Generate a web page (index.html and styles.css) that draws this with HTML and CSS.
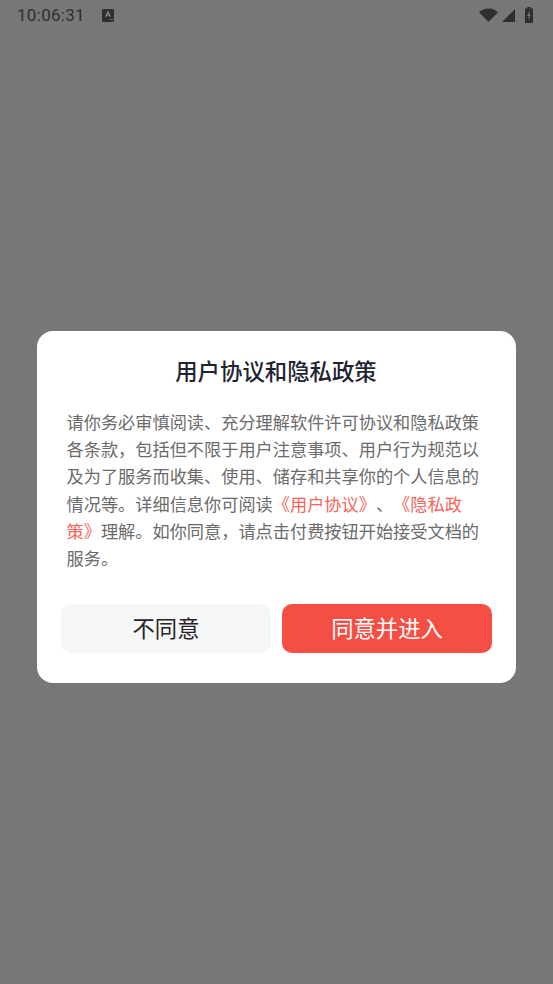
FILE: index.html
```html
<!DOCTYPE html>
<html lang="zh-CN">
  <head>
    <meta charset="utf-8">
    <title>用户协议和隐私政策</title>
    <link rel="stylesheet" href="styles.css">
  </head>
  <body>
    <div class="status-bar">
      <span class="time">10:06:31</span>
      <svg class="a-icon" width="12" height="13" viewBox="0 0 12 13">
        <rect width="12" height="13" rx="1" fill="#2f2f2f"/>
        <path d="M3.2 7.8 5.3 2.4h1.3l2.1 5.4H7.5L7.1 6.6H4.8l-.4 1.2zM5.1 5.7h1.7L6 3.6z" fill="#9a9a9a"/>
        <path d="M7.5 10h3.5v.9H7.5z" fill="#777"/>
      </svg>
      <div class="status-icons">
        <svg class="wifi" width="19" height="14" viewBox="0 0 19 14">
          <path d="M0 4.2C2.5 1.8 5.7.4 9.5.4S16.500 1.800 19 4.200L9.500 14z" fill="#2f2f2f"/>
        </svg>
        <svg class="signal" width="13" height="13" viewBox="0 0 13 13">
          <path d="M0 13 13 0v13z" fill="#2f2f2f"/>
        </svg>
        <svg class="battery" width="8" height="16" viewBox="0 0 8 16">
          <path d="M0 1.500h2.200V0h3.600v1.500H8V16H0z" fill="#2f2f2f"/>
          <path d="M4.600 3.400 2.200 9h1.600l-.5 4.400L5.800 7.500H4.200z" fill="#777"/>
        </svg>
      </div>
    </div>

    <div class="overlay">
      <div class="dialog">
        <h1 class="dialog-title">用户协议和隐私政策</h1>
        <p class="dialog-text">请你务必审慎阅读、充分理解软件许可协议和隐私政策各条款，包括但不限于用户注意事项、用户行为规范以及为了服务而收集、使用、储存和共享你的个人信息的情况等。详细信息你可阅读<a class="link">《用户协议》</a>、<a class="link">《隐私政策》</a>理解。如你同意，请点击付费按钮开始接受文档的服务。</p>
        <div class="dialog-buttons">
          <button class="btn btn-cancel">不同意</button>
          <button class="btn btn-ok">同意并进入</button>
        </div>
      </div>
    </div>
  </body>
</html>
```

FILE: styles.css
```css
html,
body {
  height: 100%;
}

body {
  margin: 0;
  background-color: #777777;
  font-family: "Noto Sans CJK SC", "Noto Sans", sans-serif;
  text-spacing-trim: space-all;
  display: flex;
  flex-direction: column;
  overflow: hidden;
}

.status-bar {
  height: 30px;
  display: flex;
  align-items: center;
  padding: 0 17px;
  box-sizing: border-box;
  color: #2f2f2f;
}

.time {
  font-family: Roboto, sans-serif;
  font-size: 17px;
  letter-spacing: 0.3px;
}

.a-icon {
  margin-left: 17px;
}

.status-icons {
  margin-left: auto;
  margin-right: 3px;
  display: flex;
  align-items: center;
}

.signal {
  margin-left: 4px;
}

.battery {
  margin-left: 10px;
}

.overlay {
  flex: 1;
  padding: 301px 37px 0;
}

.dialog {
  height: 352px;
  box-sizing: border-box;
  background-color: #ffffff;
  border-radius: 16px;
  padding: 23px 24px 30px;
  display: flex;
  flex-direction: column;
}

.dialog-title {
  margin: 0;
  text-align: center;
  font-size: 22.4px;
  line-height: 32px;
  font-weight: 500;
  color: #1f2430;
  text-indent: -1px;
}

.dialog-text {
  margin: 22px 6px 0 5.500px;
  font-size: 17.2px;
  line-height: 27.2px;
  color: #6b6b6b;
}

.link {
  color: #f8645a;
}

.dialog-buttons {
  margin-top: auto;
  display: flex;
  column-gap: 11px;
}

.btn {
  flex: 1;
  height: 49px;
  border: none;
  border-radius: 10px;
  font-family: inherit;
  font-size: 22.3px;
  padding: 0 0 4px;
}

.btn-cancel {
  background-color: #f5f6f8;
  color: #2a2426;
}

.btn-ok {
  background-color: #f54f45;
  color: #ffffff;
}
```
